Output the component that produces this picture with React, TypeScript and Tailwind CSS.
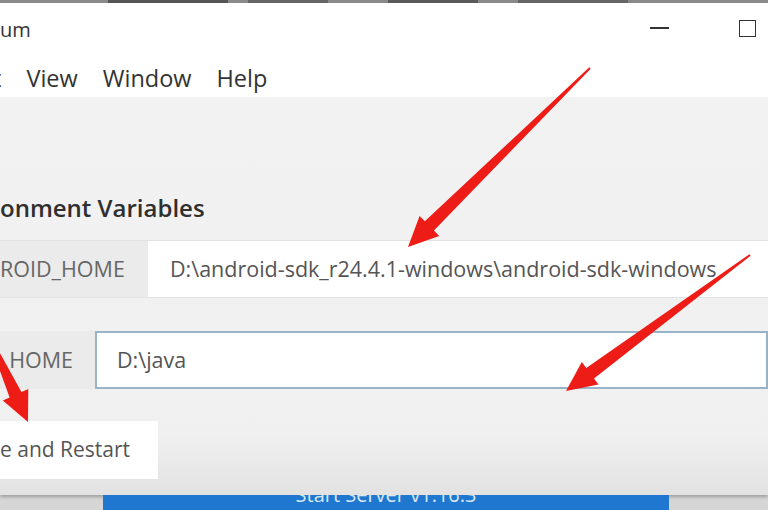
const font = { fontFamily: '"Open Sans", "Noto Sans", sans-serif' }

type Pt = [number, number]

// red annotation arrow: thin tail widening toward a triangular head
function arrowPoints(tail: Pt, tip: Pt, w0 = 2, w1 = 13, hw = 28, hl = 30) {
  const dx = tip[0] - tail[0]
  const dy = tip[1] - tail[1]
  const len = Math.hypot(dx, dy)
  const ux = dx / len
  const uy = dy / len
  const nx = -uy
  const ny = ux
  const neck: Pt = [tip[0] - ux * hl, tip[1] - uy * hl]
  const p = (b: Pt, w: number, s: number) => `${b[0] + nx * (w / 2) * s},${b[1] + ny * (w / 2) * s}`
  return [
    p(tail, w0, 1),
    p(neck, w1, 1),
    p(neck, hw, 1),
    `${tip[0]},${tip[1]}`,
    p(neck, hw, -1),
    p(neck, w1, -1),
    p(tail, w0, -1),
  ].join(' ')
}

const arrows: [Pt, Pt][] = [
  [[590, 68], [408, 247]],
  [[750, 255], [566, 391]],
  [[-14, 330], [28, 422]],
]

export default function App() {
  return (
    <div className="relative w-[768px] h-[510px] overflow-hidden bg-[#d6d6d6] text-[#333]" style={font}>
      <div className="flex h-[3px] bg-[#8a8a8a]">
        <div className="ml-[108px] w-[120px] bg-[#555]" />
        <div className="ml-[20px] w-[80px] bg-[#666]" />
        <div className="ml-[60px] w-[90px] bg-[#5a5a5a]" />
        <div className="ml-[40px] w-[110px] bg-[#666]" />
      </div>

      <div className="flex h-[492px] flex-col bg-[#f0f0f0] shadow-[0_2px_3px_rgba(0,0,0,0.25)]">
        <div className="flex h-[52px] items-center bg-white pr-[12px]">
          <span className="text-[20px] mt-[2px]">um</span>
          <div className="ml-auto mr-[70px] -mt-[3px] h-[2px] w-[19px] bg-[#333]" />
          <div className="-mt-[2px] h-[17px] w-[17px] border-[1.5px] border-[#333]" />
        </div>

        <div className="flex h-[42px] items-center gap-[25px] bg-white pt-[5px] text-[23.5px]">
          <span className="-ml-[7px]">t</span>
          <span>View</span>
          <span>Window</span>
          <span>Help</span>
        </div>

        <div className="flex flex-1 flex-col bg-gradient-to-b from-[#f2f2f2] via-[#f0f0f0] via-85% to-[#e2e2e2]">
          <h2 className="mt-[96px] text-[24px] font-semibold leading-[30px] text-[#2f2f2f]">onment Variables</h2>

          <div className="mt-[17px] flex h-[58px] border-y border-[#e2e2e2] text-[21.5px]">
            <div className="flex w-[148px] items-center bg-[#ebebeb] text-[#666]">ROID_HOME</div>
            <div className="flex flex-1 items-center bg-white pl-[22px] text-[#555]">
              D:\android-sdk_r24.4.1-windows\android-sdk-windows
            </div>
          </div>

          <div className="mt-[33px] flex h-[58px] text-[21.5px]">
            <div className="flex w-[95px] items-center justify-end bg-[#ebebeb] pr-[22px] text-[#666]">_HOME</div>
            <div className="flex flex-1 items-center border-[2px] border-[#98b2c7] bg-white pl-[20px] text-[#555]">
              D:\java
            </div>
          </div>

          <div className="mt-[32px] flex h-[58px] w-[158px] items-center bg-white text-[21px] text-[#555]">
            e and Restart
          </div>
        </div>
      </div>

      <div className="ml-[103px] h-[15px] w-[566px] overflow-hidden bg-[#1f77d0]">
        <div className="-mt-[15px] flex h-[30px] items-center justify-center text-[20px] text-[#d8e8f8]">
          Start Server v1.16.3
        </div>
      </div>

      <svg className="pointer-events-none absolute inset-0" width="768" height="510">
        {arrows.map(([a, b], i) => (
          <polygon key={i} points={arrowPoints(a, b)} fill="#ee1c16" />
        ))}
      </svg>
    </div>
  )
}
